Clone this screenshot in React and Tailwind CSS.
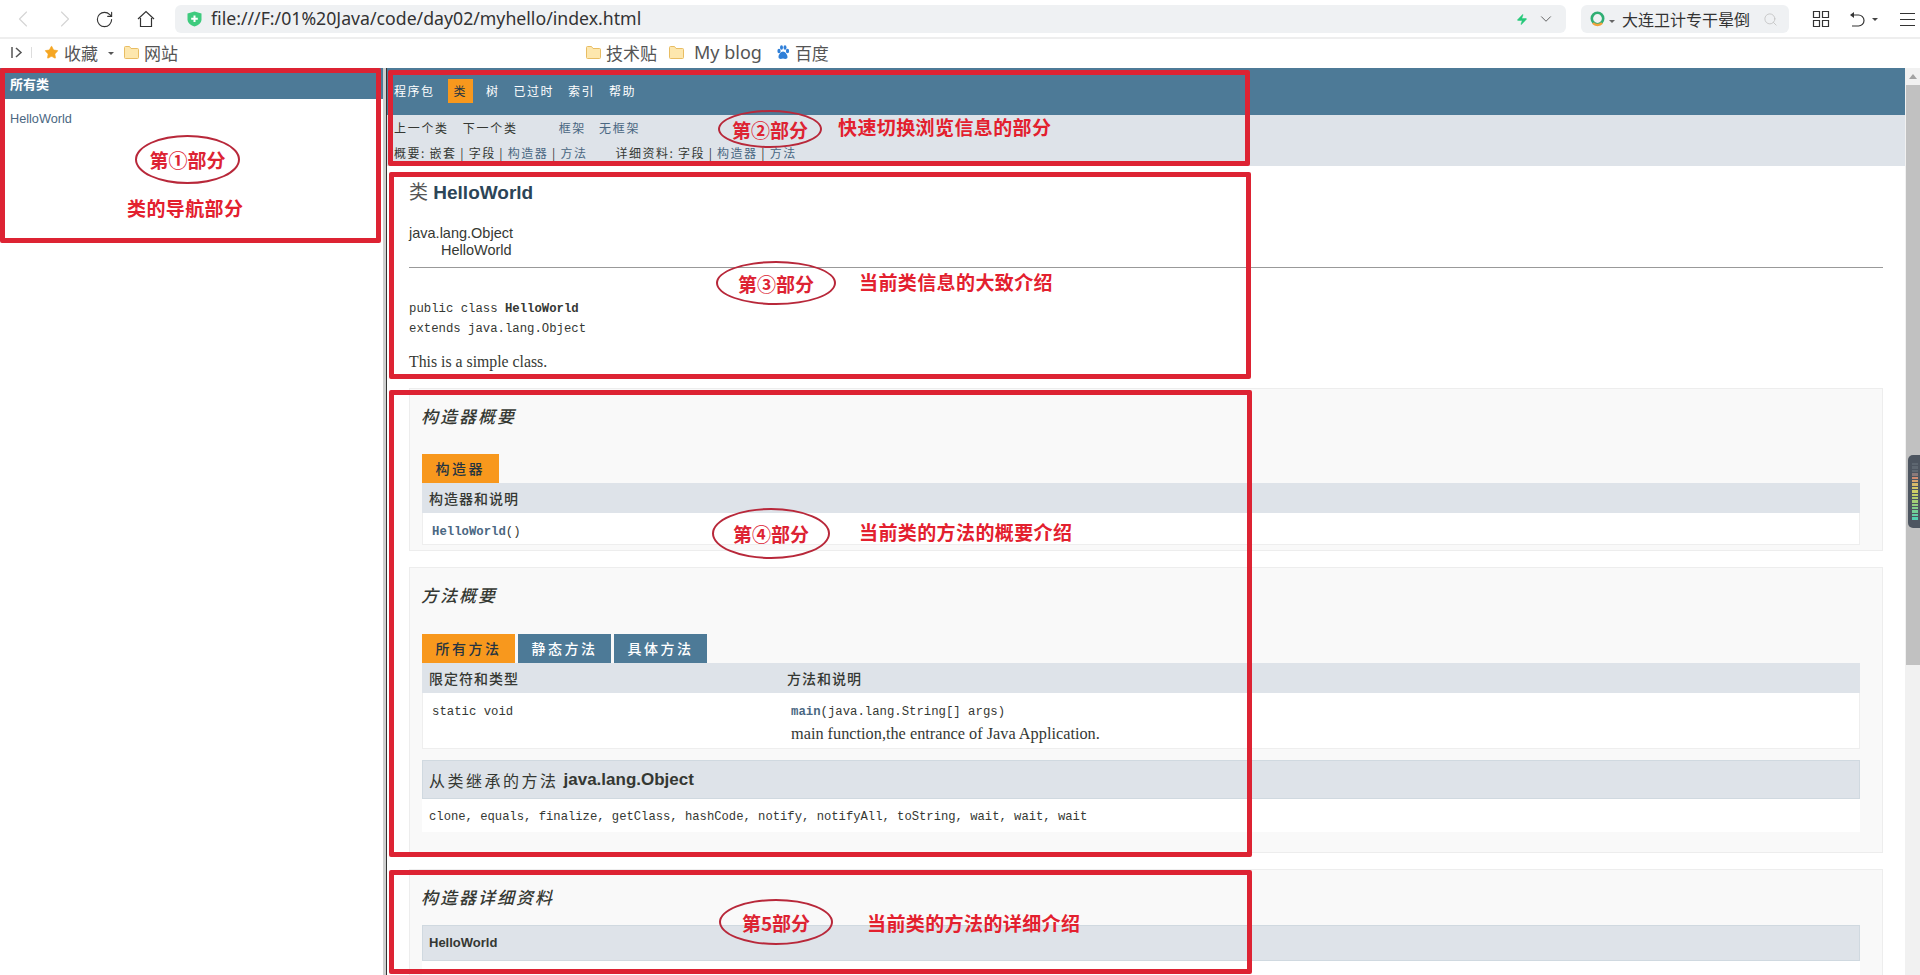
import { ChevronLeft, ChevronRight, RotateCw, ChevronDown, Search, Star, Zap } from "lucide-react";

const cjk = "font-['Noto_Sans_CJK_SC',sans-serif]";
const sans = "font-['Liberation_Sans','Noto_Sans_CJK_SC',sans-serif]";
const mono = "font-['Liberation_Mono','Noto_Sans_CJK_SC',monospace]";
const serif = "font-['Liberation_Serif','Noto_Sans_CJK_SC',serif]";

function FolderIcon() {
  return (
    <svg width="15" height="14" viewBox="0 0 15 14" className="shrink-0">
      <path d="M.5 2.5a1 1 0 0 1 1-1h4l1.5 2h6.500a1 1 0 0 1 1 1v8a1 1 0 0 1-1 1h-12a1 1 0 0 1-1-1z" fill="#fde7ae" stroke="#e8bd63" />
    </svg>
  );
}

function Toolbar() {
  return (
    <div className={`h-[39px] pt-[1px] flex items-center border-b-2 border-[#eeeeee] bg-white ${cjk}`}>
      <ChevronLeft className="w-7 h-7 ml-[9px] text-[#d5d5d5]" strokeWidth={1} />
      <ChevronRight className="w-7 h-7 ml-[14px] text-[#d5d5d5]" strokeWidth={1} />
      <RotateCw className="w-[19px] h-[19px] ml-[16px] text-[#333]" strokeWidth={1.4} />
      <svg width="18" height="18" viewBox="0 0 18 18" className="ml-[23px]" fill="none" stroke="#333" strokeWidth="1.2">
        <path d="M1 9 9 1.500 17 9M3.500 8v8.500h11V8" />
      </svg>
      <div className="ml-[20px] w-[1391px] h-[28px] bg-[#eff1f3] rounded-md flex items-center">
        <svg width="15" height="16" viewBox="0 0 15 16" className="ml-[12px]">
          <path d="M7.500.5 14.500 2.500v6c0 3.500-3.500 6-7 7-3.500-1-7-3.500-7-7v-6z" fill="#3ecb7e" />
          <path d="M7.500 4.500v6.500M4.200 7.700h6.600" stroke="#fff" strokeWidth="2" />
        </svg>
        <span className="ml-[9px] text-[17.700px] leading-none text-[#333] font-['Noto_Sans',sans-serif]">file:///F:/01%20Java/code/day02/myhello/index.html</span>
        <Zap className="w-[12px] h-[17px] ml-auto text-[#27c97a] fill-[#27c97a]" strokeWidth={1} />
        <ChevronDown className="w-[18px] h-[18px] ml-[9px] mr-[11px] text-[#555]" strokeWidth={1.2} />
      </div>
      <div className="ml-[15px] w-[208px] h-[28px] bg-[#eff1f3] rounded-md flex items-center">
        <svg width="16" height="16" viewBox="0 0 16 16" className="ml-[9px]" fill="none">
          <circle cx="7.500" cy="7.500" r="5.700" stroke="#2fae73" strokeWidth="2.600" />
          <path d="M3 12a6 6 0 0 0 9 0" stroke="#f2a23a" strokeWidth="2.600" />
        </svg>
        <span className="ml-[3px] w-0 h-0 border-x-[3px] border-x-transparent border-t-[3px] border-t-[#666] mt-[5px]" />
        <span className="ml-[7px] text-[16px] leading-none text-[#333] whitespace-nowrap">大连卫计专干晕倒</span>
        <Search className="w-[15px] h-[15px] ml-[13px] text-[#c4c4c4]" strokeWidth={1.4} />
      </div>
      <svg width="18" height="18" viewBox="0 0 18 18" className="ml-[23px]" fill="none" stroke="#333" strokeWidth="1.200">
        <path d="M1.500 1.500h6v6h-6zM10.500 1.500h6v6h-6zM1.500 10.500h6v6h-6zM10.500 10.500h6v6h-6z" />
      </svg>
      <svg width="17" height="18" viewBox="0 0 17 18" className="ml-[19px]" fill="none" stroke="#333" strokeWidth="1.200">
        <path d="M3 5h6.500a5.500 5.500 0 0 1 0 11H3" />
        <path d="M5 2v6L1 5z" fill="#333" stroke="none" />
      </svg>
      <span className="ml-[6px] w-0 h-0 border-x-[3px] border-x-transparent border-t-[3px] border-t-[#444]" />
      <svg width="15" height="15" viewBox="0 0 15 15" className="ml-[22px]" stroke="#333" strokeWidth="1.100">
        <path d="M0 1.500h15M0 7.500h15M0 13.500h15" />
      </svg>
    </div>
  );
}

function Bookmarks() {
  return (
    <div className={`h-[29px] pb-[3px] flex items-center text-[17px] leading-none text-[#555] bg-white whitespace-nowrap ${cjk}`}>
      <svg width="12" height="11" viewBox="0 0 12 11" className="ml-[11px]" fill="none" stroke="#555" strokeWidth="1.500">
        <path d="M1 0v11M5 1l5 4.500L5 10" />
      </svg>
      <span className="ml-[8px] w-px h-[11px] bg-[#ddd]" />
      <Star className="w-[15px] h-[15px] ml-[12px] text-[#f5a623] fill-[#f5a623]" strokeWidth={1} />
      <span className="ml-[5px]">收藏</span>
      <span className="ml-[10px] w-0 h-0 border-x-[3px] border-x-transparent border-t-[3px] border-t-[#555] mt-[2px]" />
      <span className="ml-[10px]"><FolderIcon /></span>
      <span className="ml-[5px]">网站</span>
      <span className="ml-[408px]"><FolderIcon /></span>
      <span className="ml-[5px]">技术贴</span>
      <span className="ml-[12px]"><FolderIcon /></span>
      <span className="ml-[10px] text-[18px] font-['Noto_Sans',sans-serif]">My blog</span>
      <svg width="14" height="15" viewBox="0 0 14 15" className="ml-[14px]" fill="#2f7fd8">
        <ellipse cx="3" cy="6" rx="1.600" ry="2.200" />
        <ellipse cx="5.500" cy="2.500" rx="1.500" ry="2.200" />
        <ellipse cx="9" cy="2.500" rx="1.500" ry="2.200" />
        <ellipse cx="11.500" cy="6" rx="1.600" ry="2.200" />
        <path d="M7 6.500c-2 0-4.500 3-4.500 5.500 0 2.500 3 2 4.500 1.500 1.500.5 4.500 1 4.500-1.500 0-2.500-2.500-5.500-4.500-5.500z" />
      </svg>
      <span className="ml-[5px]">百度</span>
    </div>
  );
}

function Sidebar() {
  return (
    <div className="w-[383px] shrink-0 bg-white">
      <div className={`h-[31px] bg-[#4d7a97] text-white text-[13px] leading-none font-bold pl-[10px] pt-[9px] ${cjk}`}>所有类</div>
      <div className={`mt-[12px] pl-[10px] text-[12.700px] leading-[16px] text-[#4a6782] ${sans}`}>HelloWorld</div>
    </div>
  );
}

function TopNav() {
  const items = ["程序包", "类", "树", "已过时", "索引", "帮助"];
  return (
    <>
      <div className={`h-[47px] bg-[#4d7a97] flex items-start pt-[11px] text-[12px] tracking-[1.5px] leading-[24px] text-white ${cjk}`}>
        {items.map((item) =>
          item === "类" ? (
            <span key={item} className="mx-[6px] px-[6px] bg-[#f8981d] text-[#253441]">{item}</span>
          ) : (
            <span key={item} className="px-[7px]">{item}</span>
          ),
        )}
      </div>
      <div className={`h-[51px] bg-[#dee3e9] text-[12px] tracking-[1.5px] leading-none text-[#353833] pl-[7px] ${cjk}`}>
        <div className="flex h-[25px] items-center tracking-[1.700px]">
          <span>上一个类</span>
          <span className="ml-[14px]">下一个类</span>
          <span className="ml-[41px] text-[#4a6782]">框架</span>
          <span className="ml-[13px] text-[#4a6782]">无框架</span>
        </div>
        <div className="flex mt-[4px] h-[18px] items-center whitespace-pre [word-spacing:-0.500px]">
          <span>概要: 嵌套 | 字段 | <span className="text-[#4a6782]">构造器</span> | <span className="text-[#4a6782]">方法</span></span>
          <span className="ml-[28px]">详细资料: 字段 | <span className="text-[#4a6782]">构造器</span> | <span className="text-[#4a6782]">方法</span></span>
        </div>
      </div>
    </>
  );
}

function SectionTitle({ children }) {
  return <h3 className={`-ml-[1px] text-[17px] leading-[24px] italic font-medium tracking-[2px] text-[#353833] ${cjk}`}>{children}</h3>;
}

function Tab({ active, children }) {
  return (
    <span className={`h-[29px] px-[13.500px] flex items-center text-[14px] tracking-[2.500px] font-medium ${cjk} ${active ? "bg-[#f8981d] text-[#253441]" : "bg-[#4d7a97] text-white"}`}>
      {children}
    </span>
  );
}

function Section({ className, children }) {
  return <section className={`bg-[#f9f9f9] border border-[#ededed] pl-[12px] pr-[22px] pt-[15px] ${className}`}>{children}</section>;
}

function Content() {
  return (
    <div className="px-[22px] text-[#353833]">
      <h2 className={`mt-[15px] text-[19px] leading-[24px] font-bold text-[#2c4557] ${sans}`}>
        <span className="font-normal text-[#555]">类</span> HelloWorld
      </h2>
      <div className={`mt-[20px] text-[14.500px] leading-[17px] ${sans}`}>
        <div>java.lang.Object</div>
        <div className="pl-[32px]">HelloWorld</div>
      </div>
      <div className="mt-[8px] h-px bg-[#999999]" />
      <div className={`mt-[31px] text-[12.300px] leading-[20px] ${mono}`}>
        <div>public class <b>HelloWorld</b></div>
        <div>extends java.lang.Object</div>
      </div>
      <p className={`mt-[13px] text-[15.800px] leading-[20px] ${serif}`}>This is a simple class.</p>

      <Section className="mt-[16px] h-[163px]">
        <SectionTitle>构造器概要</SectionTitle>
        <div className="mt-[26px] flex"><Tab active>构造器</Tab></div>
        <div className={`h-[30px] bg-[#dee3e9] flex items-center pl-[7px] text-[14px] tracking-[1px] font-medium ${cjk}`}>构造器和说明</div>
        <div className={`h-[32px] bg-white border-x border-b border-[#eeeeee] flex items-center pl-[9px] pt-[8px] text-[12.300px] text-[#353833] ${mono}`}>
          <span><b className="text-[#4a6782]">HelloWorld</b>()</span>
        </div>
      </Section>

      <Section className="mt-[16px] h-[286px]">
        <SectionTitle>方法概要</SectionTitle>
        <div className="mt-[27px] flex gap-[3px]">
          <Tab active>所有方法</Tab>
          <Tab>静态方法</Tab>
          <Tab>具体方法</Tab>
        </div>
        <div className={`h-[30px] bg-[#dee3e9] flex items-center text-[14px] tracking-[1px] font-medium ${cjk}`}>
          <span className="w-[358px] pl-[7px]">限定符和类型</span>
          <span className="pl-[7px]">方法和说明</span>
        </div>
        <div className="h-[56px] bg-white border border-t-0 border-[#eeeeee] flex">
          <div className={`w-[357px] pl-[9px] pt-[9px] text-[12.300px] leading-[20px] ${mono}`}>static void</div>
          <div className="pl-[11px] pt-[9px]">
            <div className={`text-[12.300px] leading-[20px] ${mono}`}><b className="text-[#4a6782]">main</b>(java.lang.String[] args)</div>
            <div className={`mt-[2px] text-[16.300px] leading-[20px] ${serif}`}>main function,the entrance of Java Application.</div>
          </div>
        </div>
        <div className={`mt-[11px] h-[39px] bg-[#dee3e9] border border-[#d0d9e0] flex items-center pl-[6px] text-[17px] ${sans}`}>
          <span className={`text-[16px] tracking-[2.500px] mr-[5px] ${cjk}`}>从类继承的方法</span>
          <b>java.lang.Object</b>
        </div>
        <div className={`h-[33px] pt-[3px] bg-white flex items-center pl-[7px] text-[12.200px] ${mono}`}>
          clone, equals, finalize, getClass, hashCode, notify, notifyAll, toString, wait, wait, wait
        </div>
      </Section>

      <Section className="mt-[16px] h-[160px]">
        <SectionTitle>构造器详细资料</SectionTitle>
        <div className={`mt-[16px] h-[36px] bg-[#dee3e9] border border-[#d0d9e0] flex items-center pl-[6px] text-[13px] font-bold ${sans}`}>HelloWorld</div>
        <div className="h-[40px] bg-white" />
      </Section>
    </div>
  );
}

function Scrollbar() {
  return (
    <div className="relative w-[15px] shrink-0 bg-[#f1f1f1] flex flex-col">
      <div className="h-[17px] flex items-center justify-center">
        <span className="w-0 h-0 border-x-[4px] border-x-transparent border-b-[5px] border-b-[#a3a3a3]" />
      </div>
      <div className="h-[580px] ml-[1px] bg-[#c1c1c1]" />
      <div className="absolute top-[387px] right-0 w-[12px] h-[73px] rounded-l-[5px] bg-[#4d5560] flex flex-col gap-[1px] pl-[4px] pt-[8px]">
        {["#5d6670", "#5e6771", "#606972", "#8a7a7a", "#d08b6f", "#d9a36e", "#d8b96a", "#d6c766", "#cfcf66", "#c2cf66", "#b3cf6e", "#a3cf76", "#93cf7e", "#83cf8a", "#73cf96", "#63cfa3", "#53cfb0"].map((color) => (
          <span key={color} className="w-[6px] h-[2.400px]" style={{ backgroundColor: color }} />
        ))}
      </div>
    </div>
  );
}

// 标注用的红框和文字,叠在页面上面
const boxes = [
  "left-0 top-[68px] w-[381px] h-[175px]",
  "left-[388px] top-[70px] w-[862px] h-[96px]",
  "left-[389px] top-[172px] w-[862px] h-[207px]",
  "left-[389px] top-[390px] w-[863px] h-[467px]",
  "left-[389px] top-[870px] w-[863px] h-[104px]",
];

const ellipses = [
  { pos: "left-[135px] top-[135px] w-[105px] h-[49px]", text: "第①部分" },
  { pos: "left-[718px] top-[110px] w-[104px] h-[38px]", text: "第②部分" },
  { pos: "left-[716px] top-[261px] w-[120px] h-[44px]", text: "第③部分" },
  { pos: "left-[712px] top-[508px] w-[118px] h-[51px]", text: "第④部分" },
  { pos: "left-[719px] top-[899px] w-[114px] h-[46px]", text: "第5部分" },
];

const notes = [
  { pos: "left-[127px] top-[196px]", text: "类的导航部分" },
  { pos: "left-[838px] top-[115px]", text: "快速切换浏览信息的部分" },
  { pos: "left-[859px] top-[270px]", text: "当前类信息的大致介绍" },
  { pos: "left-[859px] top-[520px]", text: "当前类的方法的概要介绍" },
  { pos: "left-[867px] top-[911px]", text: "当前类的方法的详细介绍" },
];

export default function App() {
  return (
    <div className="relative h-screen flex flex-col overflow-hidden bg-white">
      <Toolbar />
      <Bookmarks />
      <div className="flex-1 min-h-0 flex">
        <Sidebar />
        <div className="w-[4px] shrink-0 bg-[#cfcfcf] border-r border-[#333333]" />
        <div className="flex-1 min-w-0 overflow-hidden">
          <TopNav />
          <Content />
        </div>
        <Scrollbar />
      </div>

      {boxes.map((pos) => (
        <div key={pos} className={`absolute ${pos} border-[5px] border-[#dd2333] rounded-[2px]`} />
      ))}
      {ellipses.map((item) => (
        <div key={item.text} className={`absolute ${item.pos} rounded-[50%] border-2 border-[#b8283a] flex items-center justify-center text-[19px] leading-none font-bold text-[#dd2333] ${cjk}`}>
          {item.text}
        </div>
      ))}
      {notes.map((item) => (
        <div key={item.text} className={`absolute ${item.pos} text-[19px] tracking-[0.400px] leading-[24px] font-bold text-[#e3202e] whitespace-nowrap ${cjk}`}>
          {item.text}
        </div>
      ))}
    </div>
  );
}
